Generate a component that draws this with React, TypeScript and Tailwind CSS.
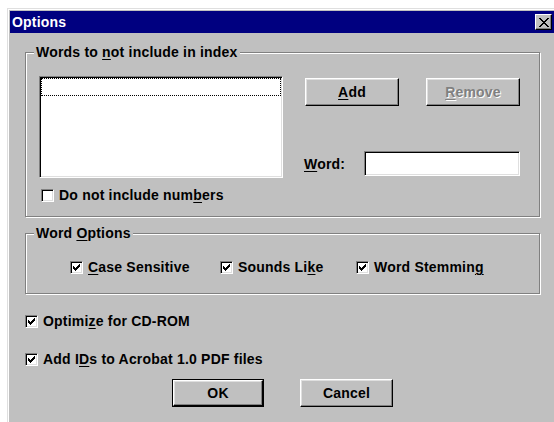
import React from "react";

// access-key letter, drawn with the classic underline
function Key({ children }: { children: React.ReactNode }) {
  return <span className="underline decoration-1 underline-offset-[2px]">{children}</span>;
}

// 7x7 pixel tick used by the checkboxes
function Tick() {
  return (
    <svg width="7" height="7" viewBox="0 0 7 7" shapeRendering="crispEdges">
      <rect x="6" y="0" width="1" height="1" />
      <rect x="5" y="1" width="2" height="1" />
      <rect x="0" y="2" width="1" height="1" />
      <rect x="4" y="2" width="3" height="1" />
      <rect x="0" y="3" width="2" height="1" />
      <rect x="3" y="3" width="3" height="1" />
      <rect x="0" y="4" width="5" height="1" />
      <rect x="1" y="5" width="3" height="1" />
      <rect x="2" y="6" width="1" height="1" />
    </svg>
  );
}

// pixel cross for the caption's close box
function CloseGlyph() {
  const rows: [number, number][][] = [
    [[0, 2], [8, 2]],
    [[1, 2], [7, 2]],
    [[2, 2], [6, 2]],
    [[3, 4]],
    [[4, 2]],
    [[3, 4]],
    [[2, 2], [6, 2]],
    [[1, 2], [7, 2]],
    [[0, 2], [8, 2]],
  ];
  return (
    <svg width="10" height="9" viewBox="0 0 10 9" shapeRendering="crispEdges">
      {rows.map((segs, y) =>
        segs.map(([x, w]) => <rect key={`${y}-${x}`} x={x} y={y} width={w} height="1" />)
      )}
    </svg>
  );
}

function CheckBox({ checked, children }: { checked?: boolean; children: React.ReactNode }) {
  return (
    <label className="flex items-center gap-[5px] leading-[16px]">
      <span className="flex h-[13px] w-[13px] shrink-0 items-center justify-center border border-t-[#808080] border-l-[#808080] border-r-white border-b-white bg-white shadow-[inset_1px_1px_0_#000,inset_-1px_-1px_0_#dfdfdf]">
        {checked && <Tick />}
      </span>
      <span>{children}</span>
    </label>
  );
}

function Button({
  children,
  width,
  isDefault,
  disabled,
}: {
  children: React.ReactNode;
  width: string;
  isDefault?: boolean;
  disabled?: boolean;
}) {
  return (
    <button className={`h-[28px] ${width} ${isDefault ? "border border-black" : ""}`}>
      <span className="flex h-full w-full items-center justify-center border border-t-white border-l-white border-r-black border-b-black shadow-[inset_-1px_-1px_0_#808080,inset_1px_1px_0_#dfdfdf]">
        <span className={disabled ? "text-[#808080] [text-shadow:1px_1px_0_#fff]" : ""}>{children}</span>
      </span>
    </button>
  );
}

function GroupBox({
  title,
  className,
  children,
}: {
  title: React.ReactNode;
  className?: string;
  children: React.ReactNode;
}) {
  return (
    <fieldset
      className={`w-[515px] border border-[#808080] shadow-[inset_1px_1px_0_#fff,1px_1px_0_#fff] ${className ?? ""}`}
    >
      <legend className="ml-[8px] bg-[#c0c0c0] px-[2px] leading-[16px]">{title}</legend>
      {children}
    </fieldset>
  );
}

export default function App() {
  return (
    <div className="h-[422px] w-full min-w-[554px] overflow-hidden bg-white pl-[7px] pt-[8px] font-['Liberation_Sans',Arial,sans-serif] text-[14px] font-bold tracking-[0.2px] text-black">
      <div className="h-[440px] border-l border-t border-[#dfdfdf] bg-white pl-px pt-px">
        <div className="h-full bg-[#c0c0c0] pl-px pt-px">
          {/* Title bar */}
          <div className="h-[22px] bg-[#000080]">
            <div className="flex h-full w-[544px] items-center justify-between px-[2px]">
              <span className="leading-[16px] text-white">Options</span>
              <span className="flex h-[16px] w-[17px] items-center justify-center border border-t-white border-l-white border-r-black border-b-black bg-[#c0c0c0] shadow-[inset_-1px_-1px_0_#808080]">
                <CloseGlyph />
              </span>
            </div>
          </div>

          {/* Dialog body */}
          <div className="flex flex-col pl-[15px]">
            <GroupBox
              className="mt-[11px] pb-[13px]"
              title={
                <>
                  Words to <Key>n</Key>ot include in index
                </>
              }
            >
              <div className="flex pl-[13px]">
                <div className="flex flex-col">
                  <div className="mt-[16px] h-[102px] w-[244px] border border-t-[#808080] border-l-[#808080] border-r-white border-b-white bg-white p-px shadow-[inset_1px_1px_0_#000,inset_-1px_-1px_0_#dfdfdf]">
                    <div className="h-[18px] border border-dotted border-black" />
                  </div>
                  <div className="ml-[2px] mt-[9px]">
                    <CheckBox>
                      Do not include num<Key>b</Key>ers
                    </CheckBox>
                  </div>
                </div>

                <div className="ml-[22px] flex flex-col">
                  <div className="mt-[18px] flex gap-[27px]">
                    <Button width="w-[94px]">
                      <Key>A</Key>dd
                    </Button>
                    <Button width="w-[94px]" disabled>
                      <Key>R</Key>emove
                    </Button>
                  </div>
                  <div className="ml-[-1px] mt-[45px] flex items-center">
                    <span className="w-[60px] leading-[16px]">
                      <Key>W</Key>ord:
                    </span>
                    <div className="h-[25px] w-[156px] border border-t-[#808080] border-l-[#808080] border-r-white border-b-white bg-white shadow-[inset_1px_1px_0_#000,inset_-1px_-1px_0_#dfdfdf]" />
                  </div>
                </div>
              </div>
            </GroupBox>

            <GroupBox
              className="mt-[8px] pb-[18px]"
              title={
                <>
                  Word <Key>O</Key>ptions
                </>
              }
            >
              <div className="mt-[18px] flex pl-[44px]">
                <div className="w-[150px]">
                  <CheckBox checked>
                    <Key>C</Key>ase Sensitive
                  </CheckBox>
                </div>
                <div className="w-[136px]">
                  <CheckBox checked>
                    Sounds Li<Key>k</Key>e
                  </CheckBox>
                </div>
                <CheckBox checked>
                  Word Stemmin<Key>g</Key>
                </CheckBox>
              </div>
            </GroupBox>

            <div className="mt-[19px]">
              <CheckBox checked>
                Optimi<Key>z</Key>e for CD-ROM
              </CheckBox>
            </div>
            <div className="mt-[22px]">
              <CheckBox checked>
                Add I<Key>D</Key>s to Acrobat 1.0 PDF files
              </CheckBox>
            </div>

            <div className="ml-[147px] mt-[12px] flex gap-[36px]">
              <Button width="w-[92px]" isDefault>
                OK
              </Button>
              <Button width="w-[93px]">Cancel</Button>
            </div>
          </div>
        </div>
      </div>
    </div>
  );
}
